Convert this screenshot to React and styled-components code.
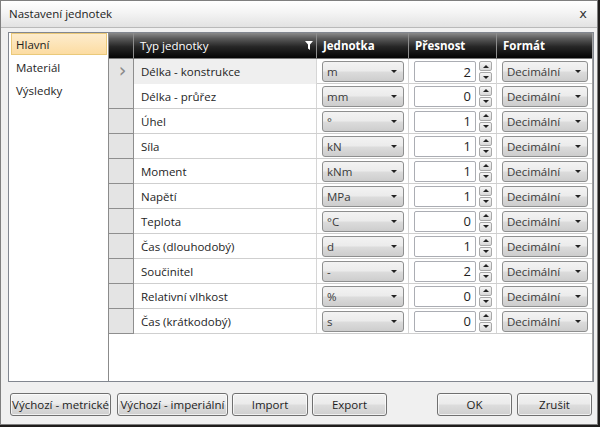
import React from "react";
import styled, { createGlobalStyle } from "styled-components";

const GlobalStyle = createGlobalStyle`
  html, body { margin: 0; padding: 0; background: #1f1d1c; }
  body { font-family: "Open Sans", "Noto Sans", sans-serif; }
  * { box-sizing: border-box; }
`;

const Window = styled.div`
  width: 598px;
  height: 425px;
  background: #f0f0f0;
  border: 1px solid #7f7f7f;
  display: flex;
  flex-direction: column;
  font-size: 11px;
  color: #1e1e1e;
`;

const TitleBar = styled.div`
  height: 27px;
  flex: none;
  display: flex;
  align-items: center;
  justify-content: space-between;
  padding: 0 10px 0 8px;
  background: linear-gradient(#ffffff 0%, #f4f4f4 45%, #e2e2e2 100%);
  border-bottom: 1px solid #b9b9b9;
`;

const Title = styled.span`
  font-size: 11.5px;
  color: #222;
  margin-top: -2px;
`;

const Close = styled.span`
  font-size: 13px;
  color: #333;
  margin-top: -2px;
  font-family: "DejaVu Sans", sans-serif;
`;

const Client = styled.div`
  flex: 1;
  display: flex;
  flex-direction: column;
  padding: 4px 3px 0 7px;
`;

const MainPanel = styled.div`
  height: 350px;
  display: flex;
  border: 1px solid #828790;
  background: #fff;
`;

const NavList = styled.div`
  width: 100px;
  flex: none;
  padding: 0 1px 0 2px;
  border-right: 1px solid #8b8b8b;
  background: #fff;
`;

const NavItem = styled.div`
  height: 22px;
  margin-bottom: 1px;
  display: flex;
  align-items: center;
  padding-left: 4px;
  font-size: 11.5px;
  color: #1e1e1e;
  border: 1px solid ${(p) => (p.$selected ? "#eac97a" : "transparent")};
  background: ${(p) =>
    p.$selected ? "linear-gradient(#fdeccd, #fcdca2)" : "transparent"};
`;

const Grid = styled.div`
  flex: 1;
  display: flex;
  flex-direction: column;
  border-right: 1px solid #a0a0a0;
`;

const cols = "25px 183px 92px 88px 1fr";

const HeaderRow = styled.div`
  display: grid;
  grid-template-columns: ${cols};
  height: 26px;
  background: linear-gradient(#8a8a8a 0%, #5a5a5a 22%, #262626 55%, #050505 100%);
  border-bottom: 1px solid #7a7a7a;
`;

const HeaderCell = styled.div`
  display: flex;
  align-items: center;
  justify-content: space-between;
  padding: 0 3px 0 6px;
  color: #fff;
  font-weight: ${(p) => (p.$bold ? 700 : 400)};
  font-size: 11.5px;
  border-right: 1px solid #8d8d8d;
  &:last-child { border-right: none; }
`;

const Row = styled.div`
  display: grid;
  grid-template-columns: ${cols};
  height: 25px;
  border-bottom: 1px solid #cfcfcf;
`;

const RowHeader = styled.div`
  background: #e4e4e4;
  border-right: 1px solid #8e8e8e;
  border-bottom: 1px solid #8e8e8e;
  margin-bottom: -1px;
  display: flex;
  align-items: center;
  justify-content: center;
  color: #8a8a8a;
  font-size: 19px;
  font-family: "DejaVu Sans", sans-serif;
  padding: 0 0 3px 3px;
`;

const Cell = styled.div`
  display: flex;
  align-items: center;
  padding: 0 4px 0 7px;
  border-right: 1px solid #d6d6d6;
  background: ${(p) => (p.$current ? "#efefef" : "#fff")};
  color: #1e1e1e;
  font-size: 11.5px;
  white-space: nowrap;
  &:last-child { border-right: none; }
`;

const ControlCell = styled.div`
  display: flex;
  align-items: center;
  padding: 0 4px 0 5px;
  border-right: 1px solid #d6d6d6;
  gap: 3px;
  &:last-child { border-right: none; }
`;

const Combo = styled.div`
  flex: 1;
  height: 21px;
  display: flex;
  align-items: center;
  justify-content: space-between;
  padding: 0 6px 0 4px;
  border: 1px solid #8e8f8f;
  border-radius: 3px;
  background: linear-gradient(#f3f3f3 0%, #ebebeb 48%, #dcdcdc 52%, #cdcdcd 100%);
  color: #3a3a3a;
  font-size: 11.5px;
  white-space: nowrap;
`;

const Arrow = styled.span`
  width: 0;
  height: 0;
  border-left: 3px solid transparent;
  border-right: 3px solid transparent;
  border-top: 3px solid #222;
`;

const NumBox = styled.div`
  width: 65px;
  height: 21px;
  border: 1px solid #abadb3;
  border-radius: 2px;
  background: #fff;
  display: flex;
  align-items: center;
  justify-content: flex-end;
  padding-right: 4px;
  font-size: 13px;
  color: #1e1e1e;
`;

const Spinner = styled.div`
  display: flex;
  flex-direction: column;
  gap: 1px;
`;

const SpinBtn = styled.div`
  width: 13px;
  height: 10px;
  border: 1px solid #a8a8a8;
  border-radius: 2px;
  background: linear-gradient(#f6f6f6, #d8d8d8);
  display: flex;
  align-items: center;
  justify-content: center;
`;

const SpinArrow = styled.span`
  width: 0;
  height: 0;
  border-left: 3px solid transparent;
  border-right: 3px solid transparent;
  ${(p) => (p.$up ? "border-bottom: 3px solid #222;" : "border-top: 3px solid #222;")}
`;

const Footer = styled.div`
  display: flex;
  align-items: center;
  padding: 11px 2px 0 2px;
`;

const Button = styled.button`
  height: 23px;
  width: ${(p) => p.$w}px;
  margin-right: ${(p) => p.$gap || 0}px;
  margin-left: ${(p) => (p.$push ? "auto" : "0")};
  padding: 0;
  font-family: inherit;
  font-size: 11.5px;
  white-space: nowrap;
  color: #1e1e1e;
  border: 1px solid #707070;
  border-radius: 3px;
  background: linear-gradient(#f2f2f2 0%, #ebebeb 48%, #dddddd 52%, #cfcfcf 100%);
  box-shadow: inset 0 0 0 1px rgba(255, 255, 255, 0.7);
`;

const Funnel = () => (
  <svg width="8" height="9" viewBox="0 0 8 9">
    <path d="M0 0 H8 L5 3.5 V9 L3 7.5 V3.5 Z" fill="#fff" />
  </svg>
);

const rows = [
  ["Délka - konstrukce", "m", 2],
  ["Délka - průřez", "mm", 0],
  ["Úhel", "°", 1],
  ["Síla", "kN", 1],
  ["Moment", "kNm", 1],
  ["Napětí", "MPa", 1],
  ["Teplota", "°C", 0],
  ["Čas (dlouhodobý)", "d", 1],
  ["Součinitel", "-", 2],
  ["Relativní vlhkost", "%", 0],
  ["Čas (krátkodobý)", "s", 0],
];

export default function App() {
  return (
    <>
      <GlobalStyle />
      <Window>
        <TitleBar>
          <Title>Nastavení jednotek</Title>
          <Close>x</Close>
        </TitleBar>
        <Client>
          <MainPanel>
            <NavList>
              <NavItem $selected>Hlavní</NavItem>
              <NavItem>Materiál</NavItem>
              <NavItem>Výsledky</NavItem>
            </NavList>
            <Grid>
              <HeaderRow>
                <HeaderCell />
                <HeaderCell>
                  Typ jednotky
                  <Funnel />
                </HeaderCell>
                <HeaderCell $bold>Jednotka</HeaderCell>
                <HeaderCell $bold>Přesnost</HeaderCell>
                <HeaderCell $bold>Formát</HeaderCell>
              </HeaderRow>
              {rows.map(([name, unit, prec], i) => (
                <Row key={name}>
                  <RowHeader>{i === 0 ? "›" : ""}</RowHeader>
                  <Cell $current={i === 0}>{name}</Cell>
                  <ControlCell>
                    <Combo>
                      {unit}
                      <Arrow />
                    </Combo>
                  </ControlCell>
                  <ControlCell>
                    <NumBox>{prec}</NumBox>
                    <Spinner>
                      <SpinBtn>
                        <SpinArrow $up />
                      </SpinBtn>
                      <SpinBtn>
                        <SpinArrow />
                      </SpinBtn>
                    </Spinner>
                  </ControlCell>
                  <ControlCell>
                    <Combo>
                      Decimální
                      <Arrow />
                    </Combo>
                  </ControlCell>
                </Row>
              ))}
            </Grid>
          </MainPanel>
          <Footer>
            <Button $w={101} $gap={6}>Výchozí - metrické</Button>
            <Button $w={111} $gap={4}>Výchozí - imperiální</Button>
            <Button $w={76} $gap={4}>Import</Button>
            <Button $w={75}>Export</Button>
            <Button $w={75} $gap={5} $push>OK</Button>
            <Button $w={75}>Zrušit</Button>
          </Footer>
        </Client>
      </Window>
    </>
  );
}
